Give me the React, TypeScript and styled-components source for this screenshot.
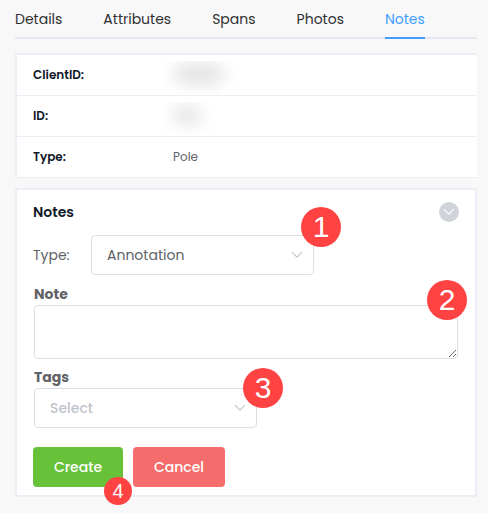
import React, { useState } from "react";
import styled, { createGlobalStyle } from "styled-components";

const GlobalStyle = createGlobalStyle`
  * { box-sizing: border-box; }
  body {
    margin: 0;
    background: #f8f8f8;
    color: #606266;
    font-family: Poppins, Inter, "Open Sans", sans-serif;
    font-size: 14px;
    line-height: 20px;
  }
  button, select, textarea { font: inherit; }
`;

const Page = styled.main`
  padding: 0 11px 16px 15px;
`;

const TabBar = styled.nav`
  display: flex;
  gap: 41px;
  border-bottom: 2px solid #e4e7ed;
  margin-bottom: 14px;
`;

const Tab = styled.a<{ $active?: boolean }>`
  padding: 9px 0 8px;
  margin-bottom: -2px;
  border-bottom: 2px solid ${(p) => (p.$active ? "#409eff" : "transparent")};
  color: ${(p) => (p.$active ? "#409eff" : "#303133")};
  text-decoration: none;
`;

const InfoTable = styled.table`
  width: 100%;
  border-collapse: separate;
  border-spacing: 0;
  border: solid #ebeef5;
  border-width: 2px 0 0 2px;
  background: #fff;
  margin-bottom: 10px;
  font-size: 12px;
`;

const InfoHead = styled.th`
  width: 140px;
  height: 41px;
  padding: 0 0 0 16px;
  border-bottom: 1px solid #ebeef5;
  color: #101828;
  font-weight: 600;
  text-align: left;
`;

const InfoCell = styled.td`
  padding: 0 16px 0 0;
  border-bottom: 1px solid #ebeef5;
`;

const InfoValue = styled.span`
  padding-left: 16px;
`;

const Redacted = styled.div`
  width: 100px;
  height: 33px;
  margin-top: 4px;
  padding: 4px 18px;
  overflow: hidden;
`;

const Smudge = styled.div<{ $wide?: boolean }>`
  width: ${(p) => (p.$wide ? 48 : 24)}px;
  height: 18px;
  background: #dcdddd;
  border-radius: 8px;
  filter: blur(9px);
`;

const Panel = styled.section`
  border: 2px solid #ebeef5;
  background: #fff;
  padding: 12px 16px 8px;
`;

const PanelHeader = styled.header`
  display: flex;
  align-items: center;
  justify-content: space-between;
  margin-bottom: 13px;
`;

const PanelTitle = styled.h2`
  margin: 0;
  color: #101828;
  font-size: 14px;
  font-weight: 600;
`;

const Collapse = styled.button`
  display: flex;
  align-items: center;
  justify-content: center;
  width: 20px;
  height: 20px;
  padding: 0;
  border: 0;
  border-radius: 50%;
  background: #d0d3da;
  color: #fff;
`;

const TypeRow = styled.div`
  display: flex;
  align-items: center;
  gap: 20px;
  margin-bottom: 9px;
`;

const TypeLabel = styled.label`
  width: 38px;
`;

const Field = styled.div`
  display: flex;
  flex-direction: column;
  margin: 0 1px 8px;
`;

const FieldLabel = styled.label`
  height: 21px;
  font-weight: 700;
`;

const Control = styled.div<{ $narrow?: boolean }>`
  position: relative;
  display: flex;
  align-items: center;
  width: ${(p) => (p.$narrow ? "223px" : "100%")};
`;

const Select = styled.select<{ $empty?: boolean }>`
  appearance: none;
  width: 100%;
  height: 40px;
  padding: 0 30px 0 15px;
  border: 1px solid #dcdfe6;
  border-radius: 4px;
  background: #fff;
  color: ${(p) => (p.$empty ? "#c0c4cc" : "#606266")};
  font-weight: ${(p) => (p.$empty ? 500 : 400)};
`;

const SelectArrow = styled.span`
  position: absolute;
  right: 11px;
  display: flex;
  color: #c0c4cc;
  pointer-events: none;
`;

const NoteInput = styled.textarea`
  display: block;
  width: 100%;
  height: 54px;
  padding: 5px 15px;
  border: 1px solid #dcdfe6;
  border-radius: 4px;
  background: #fff;
  color: inherit;
  resize: vertical;
`;

const Actions = styled.div`
  display: flex;
  gap: 10px;
  margin-top: 19px;
`;

const ActionSlot = styled.div`
  position: relative;
`;

const Action = styled.button<{ $danger?: boolean }>`
  min-width: ${(p) => (p.$danger ? 92 : 90)}px;
  height: 40px;
  padding: 0 20px;
  border: 0;
  border-radius: 4px;
  background: ${(p) => (p.$danger ? "#f56c6c" : "#67c23a")};
  color: #fff;
  font-weight: 500;
`;

const Badge = styled.span<{ $top: number; $right: number; $small?: boolean }>`
  position: absolute;
  z-index: 1;
  top: ${(p) => p.$top}px;
  right: ${(p) => p.$right}px;
  display: flex;
  align-items: center;
  justify-content: center;
  width: ${(p) => (p.$small ? 28 : 40)}px;
  height: ${(p) => (p.$small ? 28 : 40)}px;
  border-radius: 50%;
  background: #ff4242;
  color: #fff;
  font-family: "Liberation Sans", Arial, sans-serif;
  font-size: ${(p) => (p.$small ? 20 : 30)}px;
  pointer-events: none;
`;

const Chevron = () => (
  <svg width="12" height="8" viewBox="0 0 12 8" fill="none" stroke="currentColor" aria-hidden="true">
    <path d="M1 1.2 6 6.2 11 1.2" strokeWidth="1.1" />
  </svg>
);

const tabs = ["Details", "Attributes", "Spans", "Photos", "Notes"];

export default function App() {
  const [tag, setTag] = useState("");

  return (
    <>
      <GlobalStyle />
      <Page>
        <TabBar>
          {tabs.map((name) => (
            <Tab key={name} href={`#${name.toLowerCase()}`} $active={name === "Notes"}>
              {name}
            </Tab>
          ))}
        </TabBar>

        <InfoTable>
          <tbody>
            <tr>
              <InfoHead scope="row">ClientID:</InfoHead>
              <InfoCell><Redacted><Smudge $wide /></Redacted></InfoCell>
            </tr>
            <tr>
              <InfoHead scope="row">ID:</InfoHead>
              <InfoCell><Redacted><Smudge /></Redacted></InfoCell>
            </tr>
            <tr>
              <InfoHead scope="row">Type:</InfoHead>
              <InfoCell><InfoValue>Pole</InfoValue></InfoCell>
            </tr>
          </tbody>
        </InfoTable>

        <Panel>
          <PanelHeader>
            <PanelTitle>Notes</PanelTitle>
            <Collapse type="button" aria-label="Collapse notes"><Chevron /></Collapse>
          </PanelHeader>

          <TypeRow>
            <TypeLabel htmlFor="type">Type:</TypeLabel>
            <Control $narrow>
              <Select id="type" defaultValue="Annotation">
                <option>Annotation</option>
              </Select>
              <SelectArrow><Chevron /></SelectArrow>
              <Badge $top={-28} $right={-27}>1</Badge>
            </Control>
          </TypeRow>

          <Field>
            <FieldLabel htmlFor="note">Note</FieldLabel>
            <Control>
              <NoteInput id="note" />
              <Badge $top={-25} $right={-9}>2</Badge>
            </Control>
          </Field>

          <Field>
            <FieldLabel htmlFor="tags">Tags</FieldLabel>
            <Control $narrow>
              <Select id="tags" value={tag} onChange={(e) => setTag(e.target.value)} $empty={!tag}>
                <option value="">Select</option>
              </Select>
              <SelectArrow><Chevron /></SelectArrow>
              <Badge $top={-20} $right={-26}>3</Badge>
            </Control>
          </Field>

          <Actions>
            <ActionSlot>
              <Action type="button">Create</Action>
              <Badge $top={30} $right={-9} $small>4</Badge>
            </ActionSlot>
            <Action type="button" $danger>Cancel</Action>
          </Actions>
        </Panel>
      </Page>
    </>
  );
}
